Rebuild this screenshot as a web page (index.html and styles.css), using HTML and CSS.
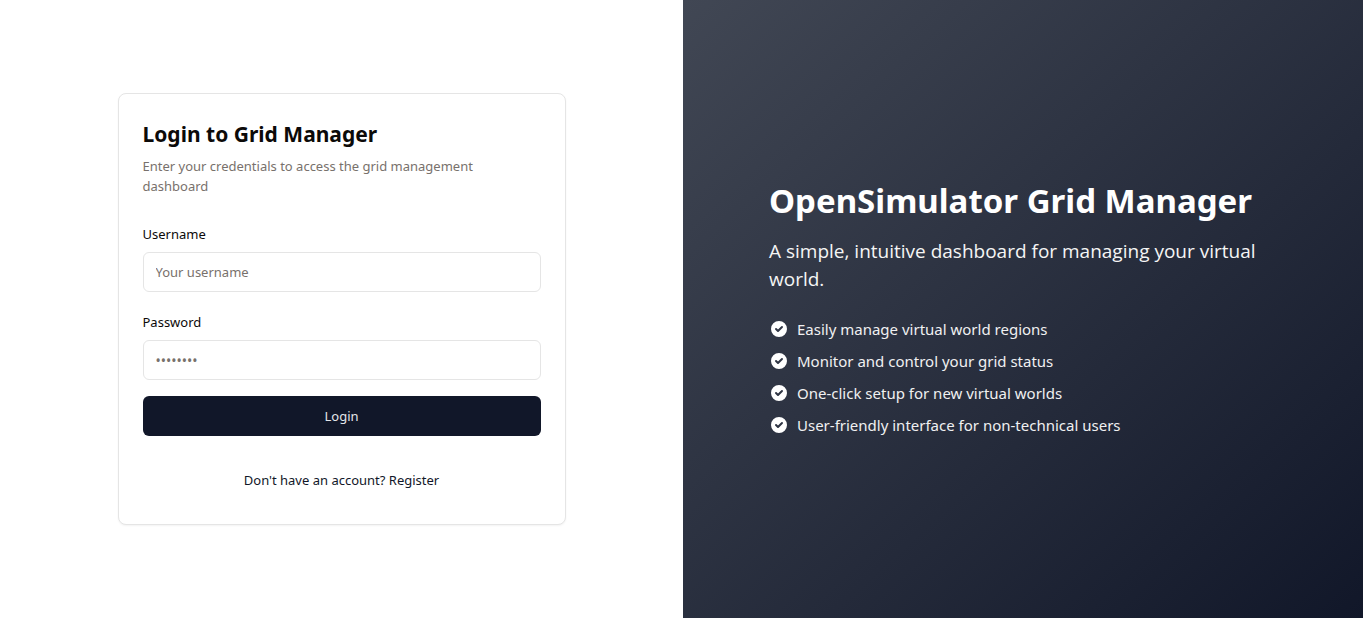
FILE: index.html
```html
<!DOCTYPE html>
<html lang="en">
<head>
<meta charset="utf-8">
<meta name="viewport" content="width=device-width, initial-scale=1">
<title>Login to Grid Manager</title>
<link rel="stylesheet" href="styles.css">
</head>
<body>
<main class="page">
  <section class="login-side">
    <form class="card">
      <header class="card-header">
        <h1 class="card-title">Login to Grid Manager</h1>
        <p class="card-description">Enter your credentials to access the grid management dashboard</p>
      </header>
      <div class="fields">
        <div class="field">
          <label class="label" for="username">Username</label>
          <input class="input" id="username" type="text" placeholder="Your username">
        </div>
        <div class="field">
          <label class="label" for="password">Password</label>
          <input class="input input-password" id="password" type="password" placeholder="••••••••">
        </div>
        <button class="button" type="submit">Login</button>
      </div>
      <footer class="card-footer">
        <a class="link" href="#register">Don't have an account? Register</a>
      </footer>
    </form>
  </section>
  <section class="hero">
    <div class="hero-content">
      <h2 class="hero-title">OpenSimulator Grid Manager</h2>
      <p class="hero-text">A simple, intuitive dashboard for managing your virtual world.</p>
      <ul class="features">
        <li class="feature"><svg class="check" viewBox="0 0 20 20" aria-hidden="true"><path fill="currentColor" fill-rule="evenodd" d="M10 18a8 8 0 100-16 8 8 0 000 16zm3.707-9.293a1 1 0 00-1.414-1.414L9 10.586 7.707 9.293a1 1 0 00-1.414 1.414l2 2a1 1 0 001.414 0l4-4z"/></svg><span class="feature-text">Easily manage virtual world regions</span></li>
        <li class="feature"><svg class="check" viewBox="0 0 20 20" aria-hidden="true"><path fill="currentColor" fill-rule="evenodd" d="M10 18a8 8 0 100-16 8 8 0 000 16zm3.707-9.293a1 1 0 00-1.414-1.414L9 10.586 7.707 9.293a1 1 0 00-1.414 1.414l2 2a1 1 0 001.414 0l4-4z"/></svg><span class="feature-text">Monitor and control your grid status</span></li>
        <li class="feature"><svg class="check" viewBox="0 0 20 20" aria-hidden="true"><path fill="currentColor" fill-rule="evenodd" d="M10 18a8 8 0 100-16 8 8 0 000 16zm3.707-9.293a1 1 0 00-1.414-1.414L9 10.586 7.707 9.293a1 1 0 00-1.414 1.414l2 2a1 1 0 001.414 0l4-4z"/></svg><span class="feature-text">One-click setup for new virtual worlds</span></li>
        <li class="feature"><svg class="check" viewBox="0 0 20 20" aria-hidden="true"><path fill="currentColor" fill-rule="evenodd" d="M10 18a8 8 0 100-16 8 8 0 000 16zm3.707-9.293a1 1 0 00-1.414-1.414L9 10.586 7.707 9.293a1 1 0 00-1.414 1.414l2 2a1 1 0 001.414 0l4-4z"/></svg><span class="feature-text">User-friendly interface for non-technical users</span></li>
      </ul>
    </div>
  </section>
</main>
</body>
</html>
```
FILE: styles.css
```css
*, *::before, *::after { box-sizing: border-box; }
body, h1, h2, p, ul { margin: 0; }
ul { padding: 0; list-style: none; }

body {
  background: #fff;
  color: #0c0a09;
  font-family: "Noto Sans", sans-serif;
  font-size: 15px;
  line-height: 24px;
}
input, button { font: inherit; }

.page {
  display: grid;
  grid-template-columns: 683fr 680fr;
  min-height: 100vh;
}
.login-side {
  display: flex;
  align-items: center;
  justify-content: center;
  padding: 32px;
}
.card {
  width: 100%;
  max-width: 448px;
  border: 1px solid #e5e5e5;
  border-radius: 8px;
  background: #fff;
  box-shadow: 0 1px 2px rgb(0 0 0 / 5%);
  font-size: 13px;
  line-height: 20px;
}
.card-header { padding: 24px; }
.card-title {
  margin-bottom: 6px;
  font-size: 21px;
  font-weight: 700;
  line-height: 32px;
}
.card-description { color: #78716c; }
.fields {
  display: grid;
  gap: 16px;
  padding: 0 24px 24px;
}
.field { padding-top: 4px; }
.label {
  display: block;
  margin-bottom: 8px;
}
.input {
  display: block;
  width: 100%;
  height: 40px;
  padding: 8px 12px;
  border: 1px solid #e5e5e5;
  border-radius: 6px;
  background: #fff;
  color: inherit;
}
.input-password { font-size: 14px; }
.input::placeholder { color: #78716c; }
.button {
  height: 40px;
  border: 0;
  border-radius: 6px;
  background: #111729;
  color: #e4e6ea;
  cursor: pointer;
}
.card-footer {
  display: flex;
  justify-content: center;
  padding: 10px 24px 34px;
}
.link {
  color: #111729;
  text-decoration: none;
}
.link:hover { text-decoration: underline; }

.hero {
  display: flex;
  align-items: center;
  justify-content: center;
  padding: 32px;
  background: linear-gradient(to bottom right, #414754, #111729);
  color: #fff;
}
.hero-content {
  width: 100%;
  max-width: 508px;
}
.hero-title {
  margin-bottom: 16px;
  font-size: 33px;
  font-weight: 700;
  line-height: 40px;
}
.hero-text {
  margin-bottom: 24px;
  color: #f5f5f5;
  font-family: "Open Sans", "Noto Sans", sans-serif;
  font-size: 19px;
  line-height: 28px;
}
.features {
  display: grid;
  gap: 8px;
}
.feature {
  display: flex;
  align-items: center;
  gap: 8px;
}
.feature-text { color: #f0f0f1; }
.check {
  flex: none;
  width: 20px;
  height: 20px;
}
```
